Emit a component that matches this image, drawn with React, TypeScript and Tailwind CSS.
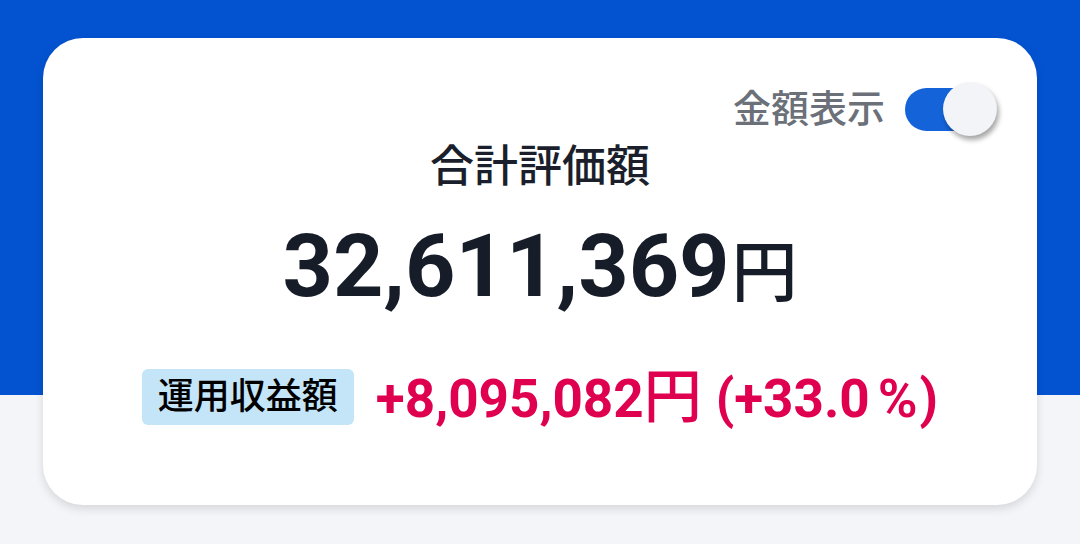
import React, { useState } from 'react';

const font = { fontFamily: '"Roboto", "Noto Sans CJK JP", sans-serif' };

const Toggle: React.FC<{ on: boolean; onChange: () => void }> = ({ on, onChange }) => (
  <button
    onClick={onChange}
    className="relative w-[94px] h-[54px] flex items-center"
    aria-pressed={on}
  >
    <span className={`ml-[2px] w-[80px] h-[43px] rounded-full ${on ? 'bg-[#1463d8]' : 'bg-gray-300'}`} />
    <span
      className={`absolute top-0 w-[54px] h-[54px] rounded-full bg-[#f3f4f7] shadow-[2px_4px_5px_rgba(0,0,0,0.35)] ${on ? 'left-[40px]' : 'left-0'}`}
    />
  </button>
);

export default function App() {
  const [show, setShow] = useState(true);

  return (
    <div
      className="w-[1080px] h-[544px] overflow-hidden bg-[linear-gradient(to_bottom,#0353d1_395px,#f4f5f9_395px)] pt-[38px] px-[43px]"
      style={font}
    >
      <div className="h-[467px] rounded-[40px] bg-white shadow-[0_4px_10px_rgba(0,0,0,0.12)] flex flex-col items-center pt-[44px]">
        <div className="self-end mr-[40px] flex items-center gap-[18px]">
          <span className="text-[38px] leading-none text-[#6b7079] font-medium">金額表示</span>
          <Toggle on={show} onChange={() => setShow(!show)} />
        </div>

        <h2 className="mt-[6px] text-[44px] leading-[50px] font-medium text-[#1a1f2b]">合計評価額</h2>

        <div className="mt-[30px] flex items-baseline text-[#161d29] leading-none">
          <span className="text-[88px] font-bold">{show ? '32,611,369' : '********'}</span>
          <span className="text-[66px] font-medium ml-[2px]">円</span>
        </div>

        <div className="mt-[58px] flex items-center gap-[22px]">
          <span className="bg-[#c4e5f8] rounded-[6px] h-[56px] px-[16px] flex items-center text-[36px] font-medium text-black">
            運用収益額
          </span>
          <span className="text-[#df004f] flex items-baseline leading-none">
            <span className="text-[53px] font-bold">{show ? '+8,095,082' : '****'}</span>
            <span className="text-[58px] font-medium">円</span>
            <span className="text-[53px] font-bold ml-[14px]">(+33.0</span>
            <span className="text-[54px] font-semibold ml-[8px]">%</span>
            <span className="text-[53px] font-bold ml-[2px]">)</span>
          </span>
        </div>
      </div>
    </div>
  );
}
